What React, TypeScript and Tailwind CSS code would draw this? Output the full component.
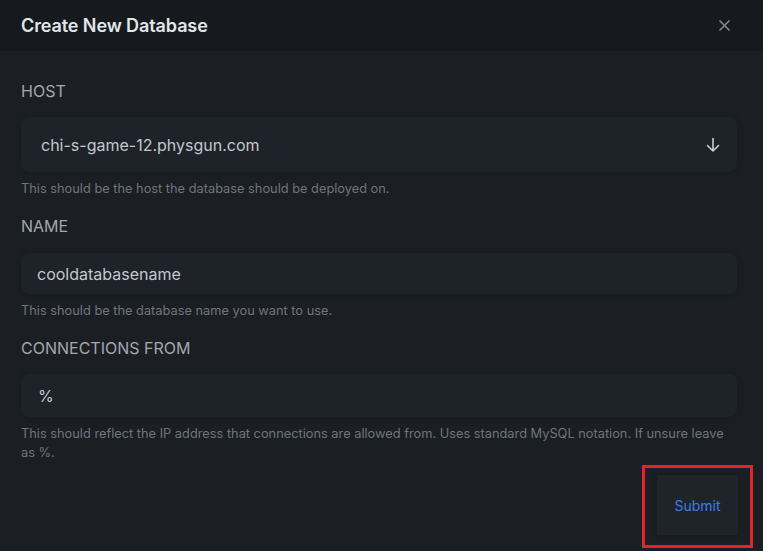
import React from "react";

const font = { fontFamily: "Inter, 'Noto Sans', sans-serif" };

function Field({
  label,
  value,
  help,
  box,
  select,
}: {
  label: string;
  value: string;
  help: React.ReactNode;
  box: string;
  select?: boolean;
}) {
  return (
    <div className="flex flex-col">
      <label className="text-[16px] leading-[20px] text-[#a3a7ae] uppercase">{label}</label>
      <div
        className={`flex items-center justify-between rounded-lg bg-[#1e2229] shadow-[0_0_6px_rgba(0,0,0,0.15)] ${box}`}
      >
        <span className="text-[16px] text-[#c4c8ce]">{value}</span>
        {select && (
          <svg width="14" height="16" viewBox="0 0 14 16" fill="none" className="mr-[17px]">
            <path d="M7 1.5V14M1.5 8.5L7 14l5.5-5.5" stroke="#c9ccd2" strokeWidth="1.6" strokeLinecap="round" strokeLinejoin="round" />
          </svg>
        )}
      </div>
      <p className="mt-[7px] text-[12.8px] leading-[19px] text-[#70757d]">{help}</p>
    </div>
  );
}

export default function App() {
  return (
    <div className="w-[763px] h-[551px] bg-[#1b1e23] flex flex-col relative overflow-hidden" style={font}>
      <div className="h-[51px] bg-[#16191d] flex items-center justify-between pl-[21px] pr-[33px] shrink-0">
        <h2 className="text-[18px] font-semibold text-[#e2e5ea] tracking-[-0.1px]">Create New Database</h2>
        <svg width="11" height="11" viewBox="0 0 11 11">
          <path d="M1 1l9 9M10 1l-9 9" stroke="#80858d" strokeWidth="1.7" strokeLinecap="round" />
        </svg>
      </div>

      <div className="flex flex-col gap-[18px] pl-[21px] pr-[26px] pt-[30px]">
        <Field
          label="Host"
          value="chi-s-game-12.physgun.com"
          help="This should be the host the database should be deployed on."
          box="mt-[16px] h-[55px] pl-[20px]"
          select
        />
        <Field
          label="Name"
          value="cooldatabasename"
          help="This should be the database name you want to use."
          box="mt-[17px] h-[41px] pl-[16px]"
        />
        <Field
          label="Connections From"
          value="%"
          help="This should reflect the IP address that connections are allowed from. Uses standard MySQL notation. If unsure leave as %."
          box="mt-[16px] h-[43px] pl-[17px]"
        />
      </div>

      <div className="flex justify-end pr-[10px] mt-[3px]">
        <div className="border-[3px] border-[#e3252a] pt-[7px] pb-[10px] px-[12px]">
          <button className="w-[81px] h-[60px] bg-[#1f232a] text-[#3a7ee8] text-[14px] shadow-[0_0_6px_rgba(0,0,0,0.2)]">
            Submit
          </button>
        </div>
      </div>
    </div>
  );
}
